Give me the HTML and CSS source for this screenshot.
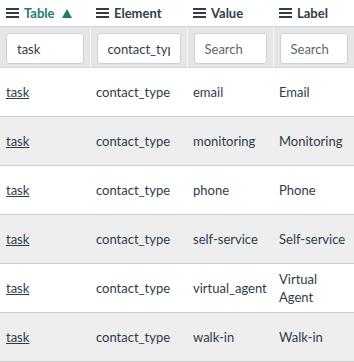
FILE: index.html
```html
<!DOCTYPE html>
<html lang="en">
<head>
  <meta charset="UTF-8" />
  <title>Choices</title>
  <link rel="stylesheet" href="styles.css">
</head>
<body>
  <table class="list">
    <colgroup>
      <col class="c-table"><col class="c-element"><col class="c-value"><col class="c-label">
    </colgroup>
    <thead>
      <tr class="head">
        <th class="sorted"><div class="th-in"><span class="menu"><i></i><i></i><i></i></span>Table <span class="arrow"></span></div></th>
        <th><div class="th-in"><span class="menu"><i></i><i></i><i></i></span>Element</div></th>
        <th><div class="th-in"><span class="menu"><i></i><i></i><i></i></span>Value</div></th>
        <th><div class="th-in"><span class="menu"><i></i><i></i><i></i></span>Label</div></th>
      </tr>
      <tr class="filters">
        <td><input type="text" value="task"></td>
        <td><input type="text" value="contact_type" class="typing"></td>
        <td><input type="text" placeholder="Search"></td>
        <td><input type="text" placeholder="Search"></td>
      </tr>
    </thead>
    <tbody>
      <tr><td><a href="#">task</a></td><td>contact_type</td><td>email</td><td>Email</td></tr>
      <tr class="odd"><td><a href="#">task</a></td><td>contact_type</td><td>monitoring</td><td>Monitoring</td></tr>
      <tr><td><a href="#">task</a></td><td>contact_type</td><td>phone</td><td>Phone</td></tr>
      <tr class="odd"><td><a href="#">task</a></td><td>contact_type</td><td>self-service</td><td>Self-service</td></tr>
      <tr><td><a href="#">task</a></td><td>contact_type</td><td>virtual_agent</td><td>Virtual Agent</td></tr>
      <tr class="odd"><td><a href="#">task</a></td><td>contact_type</td><td>walk-in</td><td>Walk-in</td></tr>
    </tbody>
  </table>
</body>
</html>
```

FILE: styles.css
```css
body { margin: 0; font-family: 'Lato', sans-serif; font-size: 13px; color: #2e3d49; background: #fff; }
.list { border-collapse: collapse; table-layout: fixed; width: 354px; }
.c-table { width: 90px; }
.c-element { width: 97px; }
.c-value { width: 86px; }
.c-label { width: 81px; }
.head th { height: 26px; padding: 0 6px; text-align: left; font-weight: bold; white-space: nowrap; border-bottom: 1px solid #cfd3d6; vertical-align: middle; }
.th-in { display: flex; align-items: center; gap: 5px; }
.head th.sorted { color: #1f7a6e; }
.menu { display: flex; flex-direction: column; justify-content: space-between; width: 13px; height: 10px; }
.menu i { display: block; height: 2px; background: #2e3d49; }
.arrow { width: 0; height: 0; margin-left: 2px; border-left: 5px solid transparent; border-right: 5px solid transparent; border-bottom: 9px solid #1f7a6e; }
.filters td { background: #e4e6e8; padding: 6px 6px 3px; height: 31px; border-left: 1px solid #f7f8f8; border-bottom: 1px solid #d5d8da; }
.filters td:first-child { border-left: none; }
.filters input { box-sizing: border-box; width: 100%; height: 31px; border: 1px solid #cdd1d4; border-radius: 3px; padding: 0 10px; font: inherit; font-size: 13px; color: #2e3d49; background: #fff; }
.filters input::placeholder { color: #5b6770; }
tbody td { height: 48px; padding: 0 6px; border-bottom: 1px solid #cccccc; vertical-align: middle; line-height: 18px; }
tbody tr.odd td { background: #eeeeee; }
tbody a { color: #2e3d49; text-decoration: underline; }
```
